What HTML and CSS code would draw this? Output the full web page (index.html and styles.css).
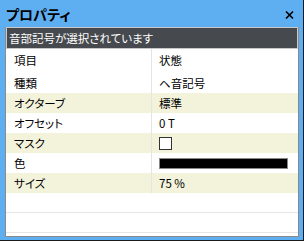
FILE: index.html
```html
<!DOCTYPE html>
<html>
    <head>
        <meta charset='utf-8'>
        <title>プロパティ</title>
        <link rel="stylesheet" href="styles.css">
    </head>
    <body>
        <div class='window'>
            <div class='titlebar'>
                <span class='title'>プロパティ</span>
                <svg class='close' width='9' height='8' viewBox='0 0 9 8'>
                    <path d='M1 0.5 L8 7.5 M8 0.5 L1 7.5' stroke='#000' stroke-width='1.6'/>
                </svg>
            </div>
            <div class='panel'>
                <div class='status'>音部記号が選択されています</div>
                <div class='grid'>
                    <div class='row head'><div class='key'>項目</div><div class='val'>状態</div></div>
                    <div class='row'><div class='key'>種類</div><div class='val'>ヘ音記号</div></div>
                    <div class='row alt'><div class='key'>オクターブ</div><div class='val'>標準</div></div>
                    <div class='row'><div class='key'>オフセット</div><div class='val'>0 T</div></div>
                    <div class='row alt'><div class='key'>マスク</div><div class='val'><span class='check'></span></div></div>
                    <div class='row'><div class='key'>色</div><div class='val'><span class='swatch'></span></div></div>
                    <div class='row alt'><div class='key'>サイズ</div><div class='val'>75 %</div></div>
                    <div class='row empty'></div>
                    <div class='row empty'></div>
                </div>
            </div>
        </div>
    </body>
</html>
```

FILE: styles.css
```css
body {
    margin: 0;
    font-family: "Noto Sans CJK JP", "Noto Sans", sans-serif;
    font-feature-settings: "palt";
}
.window {
    width: 304px;
    height: 241px;
    box-sizing: border-box;
    background: #5eaff2;
    border-right: 1px solid #1a1a1a;
    border-bottom: 1px solid #1a1a1a;
    padding: 0 4px 3px 5px;
    display: flex;
    flex-direction: column;
}
.titlebar {
    height: 27px;
    flex: none;
    display: flex;
    align-items: center;
    justify-content: space-between;
    padding: 0 5px 0 1px;
}
.title {
    font-size: 14px;
    font-weight: bold;
    color: #000;
}
.close {
    margin-top: 2px;
}
.panel {
    flex: 1;
    background: #fff;
    border: 1px solid #8a8a8a;
    border-top: 0;
    display: flex;
    flex-direction: column;
    overflow: hidden;
}
.status {
    height: 20px;
    flex: none;
    line-height: 20px;
    background: #464a4e;
    color: #fff;
    font-size: 11.5px;
    padding-left: 2px;
    border: 1px solid #c8c8c8;
}
.row {
    display: grid;
    grid-template-columns: 146px 1fr;
    height: 20px;
    font-size: 11.5px;
    color: #000;
}
.row.head {
    height: 24px;
}
.row.alt {
    background: #f3f3dc;
}
.row.empty {
    border-bottom: 1px solid #e6e6e6;
    height: 19px;
}
.key {
    padding-left: 8px;
    display: flex;
    align-items: center;
    border-right: 1px solid #e4e4e4;
}
.head .key,
.head .val {
    align-items: flex-start;
    padding-top: 3px;
}
.val {
    padding-left: 7px;
    display: flex;
    align-items: center;
}
.check {
    width: 11px;
    height: 11px;
    border: 1px solid #333;
    background: #fff;
}
.swatch {
    width: 127px;
    height: 9px;
    background: #000;
    border: 1px solid #888;
}
```
